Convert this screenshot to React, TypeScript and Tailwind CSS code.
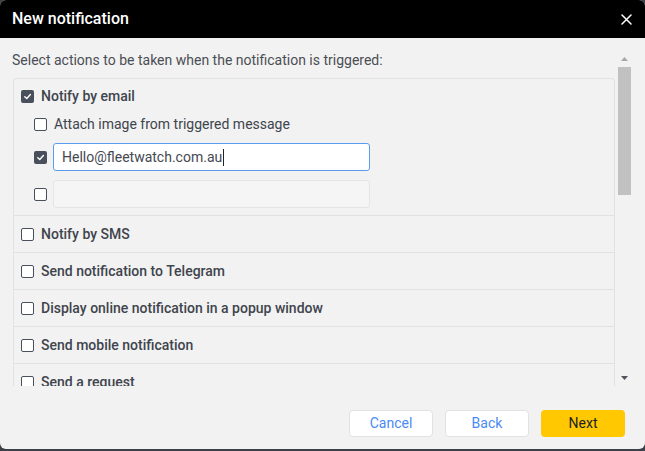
import type { ReactNode } from "react";

const actions = [
  "Notify by SMS",
  "Send notification to Telegram",
  "Display online notification in a popup window",
  "Send mobile notification",
  "Send a request",
];

function Checkbox({ checked = false }: { checked?: boolean }) {
  if (checked) {
    return (
      <span className="flex h-[13px] w-[13px] shrink-0 items-center justify-center rounded-[2px] bg-[#4a4f5c]">
        <svg width="9" height="9" viewBox="0 0 10 10" fill="none">
          <path d="M2 5.2 4.2 7.3 8.2 2.8" stroke="#fff" strokeWidth="1.6" strokeLinecap="round" strokeLinejoin="round" />
        </svg>
      </span>
    );
  }
  return <span className="h-[13px] w-[13px] shrink-0 rounded-[2px] border-[1.5px] border-[#4a4f5c] bg-white" />;
}

function Row({ children }: { children: ReactNode }) {
  return (
    <div className="flex h-[37px] shrink-0 items-center gap-[7px] border-t border-[#e2e2e2] pl-[7px] text-[14px] font-medium text-[#40444d]">
      {children}
    </div>
  );
}

export default function App() {
  return (
    <div className="h-[451px] w-[645px] bg-[#3c4149] font-['Roboto',sans-serif]">
      <div className="flex h-[449px] w-full flex-col overflow-hidden rounded-[6px] bg-[#f2f2f2]">
        <header className="flex h-[38px] shrink-0 items-center justify-between bg-black pl-[12px] pr-[12px]">
          <span className="text-[16px] font-medium text-white">New notification</span>
          <svg width="11" height="11" viewBox="0 0 11 11" className="mr-[1px]">
            <path d="M1 1 10 10M10 1 1 10" stroke="#fff" strokeWidth="1.5" strokeLinecap="round" />
          </svg>
        </header>

        <div className="mt-[12px] flex h-[336px] shrink-0 pl-[12px] pr-[14px]">
          <div className="flex min-w-0 flex-1 flex-col overflow-hidden">
            <div className="flex h-[20px] shrink-0 items-center text-[14px] text-[#4b4e55]">
              Select actions to be taken when the notification is triggered:
            </div>
            <div className="ml-px mr-px mt-[8px] flex flex-col rounded-t-[4px] border-x border-t border-[#e2e2e2]">
              <div className="flex shrink-0 flex-col pb-[7px]">
                <div className="flex h-[35px] items-center gap-[7px] pl-[7px] text-[14px] font-medium text-[#40444d]">
                  <Checkbox checked />
                  <span>Notify by email</span>
                </div>
                <div className="flex h-[20px] items-center gap-[7px] pl-[20px] text-[14px] text-[#40444d]">
                  <Checkbox />
                  <span>Attach image from triggered message</span>
                </div>
                <div className="mt-[9px] flex items-center gap-[6px] pl-[20px]">
                  <Checkbox checked />
                  <div className="flex h-[28px] w-[317px] items-center rounded-[3px] border border-[#5b9cf0] bg-white pl-[8px] text-[14px] text-[#444851]">
                    Hello@fleetwatch.com.au
                    <span className="ml-px h-[17px] w-px bg-[#222]" />
                  </div>
                </div>
                <div className="mt-[9px] flex items-center gap-[6px] pl-[20px]">
                  <Checkbox />
                  <div className="h-[28px] w-[317px] rounded-[3px] border border-[#e5e5e8] bg-[#f5f5f6]" />
                </div>
              </div>
              {actions.map((a) => (
                <Row key={a}>
                  <Checkbox />
                  <span>{a}</span>
                </Row>
              ))}
            </div>
          </div>

          <div className="ml-[2px] flex w-[13px] shrink-0 flex-col items-center">
            <div className="flex h-[17px] w-full items-center justify-center">
              <svg width="7" height="4" viewBox="0 0 7 4">
                <path d="M0 4 3.5 0 7 4Z" fill="#a6a8ad" />
              </svg>
            </div>
            <div className="h-[128px] w-full bg-[#c1c1c1]" />
            <div className="flex-1" />
            <div className="flex h-[16px] w-full items-center justify-center">
              <svg width="7" height="4" viewBox="0 0 7 4">
                <path d="M0 0 3.5 4 7 0Z" fill="#4f535b" />
              </svg>
            </div>
          </div>
        </div>

        <div className="mt-[24px] flex justify-end gap-[12px] pr-[20px]">
          <button className="h-[27px] w-[84px] rounded-[4px] border border-[#e2e2e2] bg-white text-[14px] text-[#4a8af4]">
            Cancel
          </button>
          <button className="h-[27px] w-[84px] rounded-[4px] border border-[#e2e2e2] bg-white text-[14px] text-[#4a8af4]">
            Back
          </button>
          <button className="h-[27px] w-[84px] rounded-[4px] bg-[#ffc800] text-[14px] text-[#222]">
            Next
          </button>
        </div>
      </div>
    </div>
  );
}
